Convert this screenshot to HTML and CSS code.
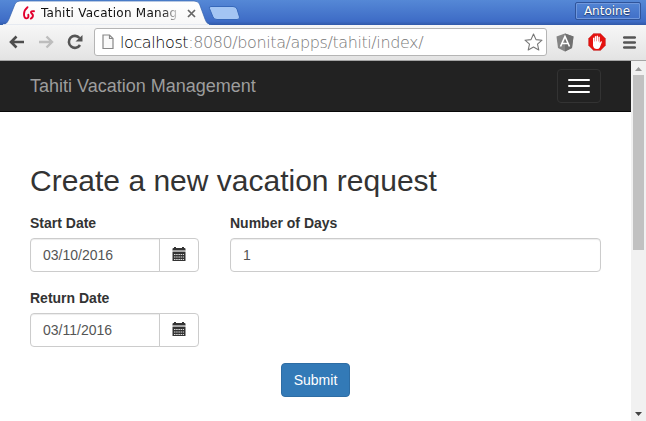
FILE: index.html
```html
<!DOCTYPE html>
<html lang="en">
<head>
<meta charset="utf-8">
<title>Tahiti Vacation Management</title>
<link rel="stylesheet" href="styles.css">
</head>
<body>
<div class="window">
  <header class="tabstrip">
    <div class="tab">
      <svg class="tab-shape" width="242" height="25" viewBox="0 0 242 25">
        <defs><linearGradient id="tabfill" x1="0" y1="0" x2="0" y2="1"><stop offset="0" stop-color="#fff"/><stop offset="1" stop-color="#f7f7f7"/></linearGradient></defs>
        <path d="M0 25C6 25 7 23 9 19L15 4Q16.500 1 20 1H194Q198 1 199.500 4L205 19Q207 25 212 25Z" fill="url(#tabfill)" stroke="#3261ae" stroke-width=".7"/>
        <path d="M3 25H209" stroke="#f7f7f7" stroke-width="1.400"/>
        <path d="M211 6.500H233Q236 6.500 237 9L239.500 17Q240 19.500 237 19.500H217Q214 19.500 213 17L209.500 8.500Q208.500 6.500 211 6.500Z" fill="#a3c5f3" stroke="#3668ba"/>
      </svg>
      <svg class="favicon" width="14" height="16" viewBox="0 0 14 16" fill="none" stroke="#e2002d" stroke-width="1.900" stroke-linecap="round">
        <path d="M5.500 2.200Q2 5 2 9Q2 13.500 4.600 13.400Q7 13 6.300 9.800"/>
        <path d="M12 6.200Q8.800 5.800 9 7.600L10.800 9.800Q11.500 12.300 8.800 13.600"/>
      </svg>
      <span class="tab-title">Tahiti Vacation Manag</span>
      <svg class="tab-close" width="9" height="9" viewBox="0 0 9 9"><path d="M1 1L8 8M8 1L1 8" stroke="#666" stroke-width="1.700"/></svg>
    </div>
    <div class="profile">Antoine</div>
  </header>
  <div class="toolbar">
    <svg class="nav-icon" width="16" height="14" viewBox="0 0 16 14"><path d="M15 7H2M7.500 1.500L2 7L7.500 12.500" fill="none" stroke="#4d4d4d" stroke-width="2.600"/></svg>
    <svg class="nav-icon" width="16" height="14" viewBox="0 0 16 14"><path d="M1 7H14M8.500 1.500L14 7L8.500 12.500" fill="none" stroke="#bdbdbd" stroke-width="2.400"/></svg>
    <svg class="nav-icon" width="16" height="16" viewBox="0 0 16 16"><path d="M12.500 4A6 6 0 1 0 13 11" fill="none" stroke="#555" stroke-width="2.600"/><path d="M15.500 1V7.500H8.500Z" fill="#555"/></svg>
    <div class="omnibox">
      <svg width="12" height="16" viewBox="0 0 12 16"><path d="M1 1H7.500L11 4.500V14.500H1ZM7.500 1V4.500H11" fill="#fafafa" stroke="#888" stroke-width="1.200"/></svg>
      <span class="url"><b>localhost</b>:8080/bonita/apps/tahiti/index/</span>
      <svg class="star" width="19" height="18" viewBox="0 0 19 18"><path d="M9.500 1L12 6.600L18 7.200L13.500 11.100L14.800 17L9.500 14L4.200 17L5.500 11.100L1 7.200L7 6.600Z" fill="#fff" stroke="#777" stroke-width="1.100" stroke-linejoin="round"/></svg>
    </div>
    <svg class="ext" width="18" height="19" viewBox="0 0 18 19"><path d="M9 .5L17.500 3.500L16 15L9 18.500L2 15L.5 3.500Z" fill="#858585"/><path d="M9 .5L17.500 3.500L16 15L9 18.500Z" fill="#707070"/><path d="M4.500 13.500L9 3.500L13.500 13.500M6.200 10.500H11.800" fill="none" stroke="#fff" stroke-width="1.600"/></svg>
    <svg class="ext" width="18" height="18" viewBox="0 0 18 18"><path d="M5.500 .5H12.500L17.500 5.500V12.500L12.500 17.500H5.500L.5 12.500V5.500Z" fill="#e5120f" stroke="#c95d5d" stroke-width=".6"/><path d="M5 9.500V5Q5.700 4 6.400 5V8.500H6.800V3.500Q7.500 2.500 8.200 3.500V8.300H8.600V3Q9.300 2 10 3V8.500H10.400V4Q11.100 3 11.800 4V10L13 8.300Q14 8 13.900 9L11.800 14.500Q11 16 9 16Q5.500 16 5 12.500Z" fill="#fff"/></svg>
    <svg class="menu" width="13" height="13" viewBox="0 0 13 13"><path d="M1.200 1.500H11.800M1.200 6.500H11.800M1.200 11.500H11.800" stroke="#555" stroke-width="2.600" stroke-linecap="round"/></svg>
  </div>
  <div class="viewport">
    <div class="page">
      <nav class="navbar">
        <a class="brand">Tahiti Vacation Management</a>
        <button class="toggle" aria-label="Menu"><i></i><i></i><i></i></button>
      </nav>
      <main class="content">
        <h2>Create a new vacation request</h2>
        <div class="row">
          <div class="group date">
            <label>Start Date</label>
            <div class="input-group"><div class="control">03/10/2016</div><div class="addon"><svg width="14" height="14" viewBox="0 0 14 14"><use href="#calendar"/></svg></div></div>
          </div>
          <div class="group days">
            <label>Number of Days</label>
            <div class="control">1</div>
          </div>
        </div>
        <div class="row">
          <div class="group date">
            <label>Return Date</label>
            <div class="input-group"><div class="control">03/11/2016</div><div class="addon"><svg width="14" height="14" viewBox="0 0 14 14"><g id="calendar"><path d="M.5 2Q.5 1 1.500 1H2V0H4V1H10V0H12V1H12.500Q13.500 1 13.500 2V3.500H.5Z" fill="#333"/><path d="M.5 3.500H13.500V5H.5Z" fill="#aaa"/><path d="M.5 5H13.500V14H.5Z" fill="#333"/><path d="M2 7.500H12M2 10H12M2 12.500H12" stroke="#ddd" stroke-width="1" stroke-dasharray="1.500 .7"/></g></svg></div></div>
          </div>
        </div>
        <button class="submit">Submit</button>
      </main>
    </div>
    <div class="scrollbar">
      <svg width="7" height="4" viewBox="0 0 7 4"><path d="M0 4L3.500 0L7 4Z" fill="#999"/></svg>
      <div class="thumb"></div>
      <svg class="down" width="7" height="4" viewBox="0 0 7 4"><path d="M0 0H7L3.500 4Z" fill="#444"/></svg>
    </div>
  </div>
</div>
</body>
</html>
```
FILE: styles.css
```css
* { box-sizing: border-box; }
body { margin: 0; background: #fff; color: #333; font: 14px/20px "Liberation Sans", Arial, sans-serif; }
svg { display: block; flex: none; }
.window { width: 646px; height: 421px; display: flex; flex-direction: column; overflow: hidden; }
.tabstrip { height: 25px; flex: none; display: flex; justify-content: space-between; background: linear-gradient(#5588d6, #3e6cc6 85%, #3159a8); }
.tab { position: relative; width: 242px; height: 25px; display: flex; align-items: center; padding-left: 22px; }
.tab-shape { position: absolute; left: 0; top: 0; }
.favicon { position: relative; margin-top: 1px; }
.tab-title { position: relative; width: 141px; margin-left: 5px; overflow: hidden; white-space: nowrap; color: #111; font: 12px/16px "DejaVu Sans", sans-serif; letter-spacing: .25px; -webkit-mask-image: linear-gradient(to right, #000 122px, transparent 139px); mask-image: linear-gradient(to right, #000 122px, transparent 139px); }
.tab-close { position: relative; margin-left: 5px; margin-top: 1px; }
.profile { width: 66px; height: 18px; margin: 2px 5px 0 0; border: 1px solid #2f549a; border-radius: 2px; box-shadow: inset 0 0 0 1px #6f97dc; color: #fff; text-align: center; font: 12px/16px "DejaVu Sans", sans-serif; padding-right: 2px; text-shadow: 0 1px 1px #233e70, 0 0 1px #233e70; }
.toolbar { height: 36px; flex: none; display: flex; align-items: center; padding: 0 9px 1px 9px; background: linear-gradient(#f7f7f7, #e3e3e3); border-bottom: 1px solid #a5a5a5; }
.nav-icon { margin-right: 13px; }
.omnibox { width: 453px; height: 28px; margin-left: -2px; display: flex; align-items: center; padding: 0 3px 0 7px; background: #fff; border: 1px solid #b5b5b5; border-radius: 3px; }
.url { margin-left: 6px; padding-top: 2px; color: #777; white-space: nowrap; font: 200 16px/22px "DejaVu Sans Light", "DejaVu Sans", sans-serif; letter-spacing: -.4px; }
.url b { color: #000; font-weight: inherit; }
.star { margin-left: auto; }
.ext { margin-left: 9px; margin-right: 5px; }
.menu { margin-left: 12px; }
.viewport { flex: 1; display: flex; min-height: 0; }
.page { width: 631px; }
.navbar { height: 51px; display: flex; align-items: center; justify-content: space-between; padding: 0 30px; background: #222; border-bottom: 1px solid #080808; }
.brand { color: #9d9d9d; font-size: 18px; line-height: 20px; }
.toggle { width: 44px; height: 34px; padding: 0 10px; display: flex; flex-direction: column; justify-content: center; gap: 4px; background: transparent; border: 1px solid #333; border-radius: 4px; }
.toggle i { display: block; height: 2px; width: 22px; border-radius: 1px; background: #fff; }
.content { padding: 52px 30px 0; display: flex; flex-direction: column; }
h2 { margin: 0 0 16px; font-size: 30px; line-height: 33px; font-weight: 400; }
.row { display: flex; gap: 31px; height: 75px; }
.date { width: 169px; }
.days { flex: 1; }
label { display: block; font-weight: 700; margin-bottom: 5px; }
.input-group { display: flex; }
.control { flex: 1; height: 34px; padding: 6px 12px; color: #555; border: 1px solid #ccc; border-radius: 4px; box-shadow: inset 0 1px 1px rgba(0, 0, 0, .075); }
.input-group .control { border-radius: 4px 0 0 4px; }
.addon { width: 40px; height: 34px; margin-left: -1px; display: flex; align-items: center; justify-content: center; padding-bottom: 2px; border: 1px solid #ccc; border-radius: 0 4px 4px 0; }
.submit { align-self: center; width: 69px; height: 34px; padding: 0; color: #fff; background: #337ab7; border: 1px solid #2e6da4; border-radius: 4px; font: 14px/20px "Liberation Sans", Arial, sans-serif; }
.scrollbar { width: 15px; padding: 6px 0 5px; display: flex; flex-direction: column; align-items: center; background: #f1f1f1; }
.thumb { width: 11px; height: 175px; margin-top: 4px; background: #c1c1c1; }
.down { margin-top: auto; }
```
